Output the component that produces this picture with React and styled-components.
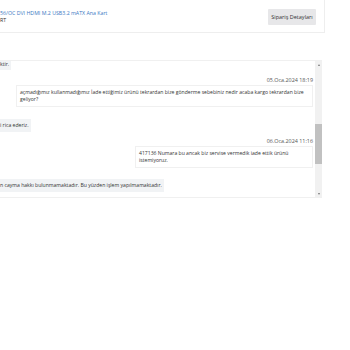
import React from "react";
import styled, { createGlobalStyle } from "styled-components";

const Global = createGlobalStyle`
  html, body { margin: 0; padding: 0; background: #fff; }
  body { font-family: "Open Sans", "Noto Sans", sans-serif; color: #333; }
`;

const Page = styled.div`
  width: 350px;
  height: 350px;
  overflow: hidden;
  display: flex;
  flex-direction: column;
`;

const HeaderCard = styled.div`
  width: 325px;
  height: 33px;
  box-sizing: border-box;
  border-right: 1px solid #eeeeee;
  border-bottom: 1px solid #eeeeee;
  display: flex;
  align-items: center;
  justify-content: space-between;
  padding-right: 8px;
`;

const ProductInfo = styled.div`
  display: flex;
  flex-direction: column;
  font-size: 5.25px;
  line-height: 7px;
  margin-top: 1px;
`;

const ProductLink = styled.a`
  color: #3a78c3;
  text-decoration: none;
`;

const Brand = styled.span`
  color: #333;
`;

const DetailButton = styled.button`
  width: 48px;
  height: 16px;
  border: none;
  border-radius: 1px;
  background: #e7e7e9;
  color: #333;
  font-family: inherit;
  font-size: 5.5px;
  padding: 0;
  margin-top: 1px;
`;

const ChatPanel = styled.div`
  margin-top: 27px;
  width: 322px;
  height: 138px;
  box-sizing: border-box;
  border-top: 1px solid #f0f0f0;
  border-bottom: 1px solid #f0f0f0;
  display: flex;
  overflow: hidden;
`;

const Messages = styled.div`
  flex: 1;
  display: flex;
  flex-direction: column;
  padding-right: 2px;
  font-size: 5.1px;
  line-height: 7px;
`;

const LeftBubble = styled.div`
  align-self: flex-start;
  background: #f1f3f5;
  padding: ${(p) => (p.$cut ? "0 2px 2px 0" : "3px 2px 3px 0")};
  margin-top: ${(p) => p.$mt || 0}px;
  color: #333;
`;

const DateLine = styled.div`
  align-self: flex-end;
  color: #555;
  font-size: 5.4px;
  margin-top: ${(p) => p.$mt || 0}px;
  margin-bottom: 1px;
`;

const RightBubble = styled.div`
  align-self: flex-end;
  width: ${(p) => p.$w}px;
  box-sizing: border-box;
  background: #fff;
  border: 1px solid #f0f0f0;
  padding: 3px 3px;
  white-space: pre-line;
  color: #333;
`;

const ScrollBar = styled.div`
  width: 7px;
  background: #f1f1f1;
  display: flex;
  flex-direction: column;
  align-items: center;
`;

const Arrow = styled.div`
  width: 0;
  height: 0;
  border-left: 1.5px solid transparent;
  border-right: 1.5px solid transparent;
  ${(p) =>
    p.$down
      ? "border-top: 2px solid #777; margin-bottom: 2px;"
      : "border-bottom: 2px solid #777; margin-top: 3px;"}
`;

const Track = styled.div`
  flex: 1;
  width: 100%;
  display: flex;
  flex-direction: column;
  padding-top: 58px;
  box-sizing: border-box;
`;

const Thumb = styled.div`
  height: 40px;
  width: 100%;
  background: #c1c1c1;
`;

export default function App() {
  return (
    <Page>
      <Global />
      <HeaderCard>
        <ProductInfo>
          <ProductLink>56/OC DVI HDMI M.2 USB3.2 mATX Ana Kart</ProductLink>
          <Brand>RT</Brand>
        </ProductInfo>
        <DetailButton>Sipariş Detayları</DetailButton>
      </HeaderCard>
      <ChatPanel>
        <Messages>
          <LeftBubble $cut $mt={0}>ktir.</LeftBubble>
          <DateLine $mt={7}>05.Oca.2024 18:19</DateLine>
          <RightBubble $w={297}>
            {"açmadığımız kullanmadığımız İade ettiğimiz ürünü tekrardan bize gönderme sebebiniz nedir acaba kargo tekrardan bize\ngeliyor?"}
          </RightBubble>
          <LeftBubble $mt={12}>i rica ederiz.</LeftBubble>
          <DateLine $mt={6}>06.Oca.2024 11:16</DateLine>
          <RightBubble $w={178}>
            {"417136 Numara bu ancak biz servise vermedik iade ettik ürünü\nistemiyoruz."}
          </RightBubble>
          <LeftBubble $mt={11}>
            n cayma hakkı bulunmamaktadır. Bu yüzden işlem yapılmamaktadır.
          </LeftBubble>
        </Messages>
        <ScrollBar>
          <Arrow />
          <Track>
            <Thumb />
          </Track>
          <Arrow $down />
        </ScrollBar>
      </ChatPanel>
    </Page>
  );
}
